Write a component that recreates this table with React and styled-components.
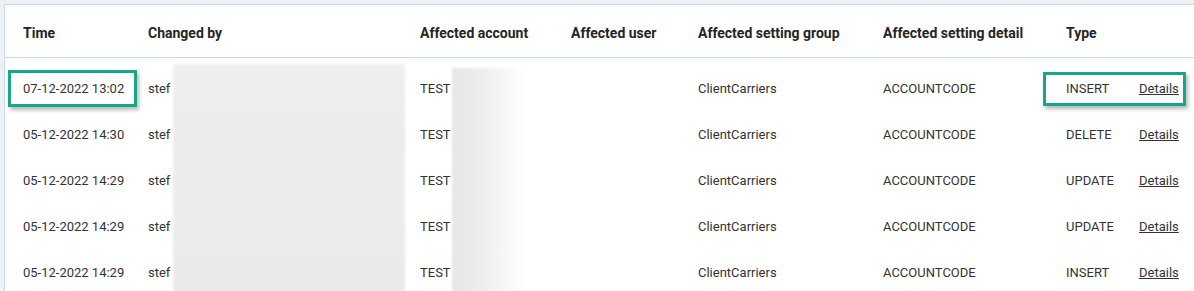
import React from "react";
import styled, { createGlobalStyle } from "styled-components";

const Global = createGlobalStyle`
  html, body { margin: 0; padding: 0; background: #eef1f4; }
  body { font-family: Roboto, "Liberation Sans", Arial, sans-serif; overflow: hidden; }
`;

const Page = styled.div`
  padding: 4px 0 0 4px;
  height: 291px;
  box-sizing: border-box;
`;

const Panel = styled.div`
  background: #fff;
  border-top: 1px solid #c3d9e8;
  border-left: 1px solid #c9dbe6;
  height: 100%;
  box-sizing: border-box;
`;

const cols = "125px 272px 151px 127px 185px 183px 73px 1fr";

const HeaderRow = styled.div`
  display: grid;
  grid-template-columns: ${cols};
  align-items: center;
  height: 52px;
  padding-left: 18px;
  border-bottom: 1px solid #c6dbea;
`;

const HeadCell = styled.div`
  font-size: 14px;
  font-weight: 700;
  color: #252525;
  padding-top: 4px;
  white-space: nowrap;
`;

const Body = styled.div`
  position: relative;
  padding-top: 7px;
`;

const Row = styled.div`
  display: grid;
  grid-template-columns: ${cols};
  align-items: center;
  height: 46px;
  padding-left: 18px;
  position: relative;
`;

const Cell = styled.div`
  font-size: 13px;
  color: #333;
  white-space: nowrap;
`;

const Link = styled.a`
  font-size: 13px;
  color: #333;
  text-decoration: underline;
  cursor: pointer;
`;

const Highlight = styled.div`
  position: absolute;
  top: 5px;
  height: 31px;
  border: 3px solid #17a688;
  box-shadow: 2px 3px 4px rgba(0, 0, 0, 0.28);
  pointer-events: none;
`;

const Redaction = styled.div`
  position: absolute;
  top: ${(p) => p.$top}px;
  bottom: 0;
  left: ${(p) => p.$left}px;
  width: ${(p) => p.$width}px;
  background: ${(p) => p.$bg};
  filter: blur(1.5px);
`;

const rows = [
  ["07-12-2022 13:02", "INSERT"],
  ["05-12-2022 14:30", "DELETE"],
  ["05-12-2022 14:29", "UPDATE"],
  ["05-12-2022 14:29", "UPDATE"],
  ["05-12-2022 14:29", "INSERT"],
];

const headers = [
  "Time",
  "Changed by",
  "Affected account",
  "Affected user",
  "Affected setting group",
  "Affected setting detail",
  "Type",
  "",
];

export default function App() {
  return (
    <>
      <Global />
      <Page>
        <Panel>
          <HeaderRow>
            {headers.map((h, i) => (
              <HeadCell key={i}>{h}</HeadCell>
            ))}
          </HeaderRow>
          <Body>
            {rows.map(([t, type], i) => (
              <Row key={i}>
                <Cell>{t}</Cell>
                <Cell>stef</Cell>
                <Cell>TEST</Cell>
                <Cell></Cell>
                <Cell>ClientCarriers</Cell>
                <Cell>ACCOUNTCODE</Cell>
                <Cell>{type}</Cell>
                <Cell>
                  <Link>Details</Link>
                </Cell>
                {i === 0 && (
                  <>
                    <Highlight style={{ left: 3, width: 123 }} />
                    <Highlight style={{ left: 1038, width: 137, top: 7, height: 28 }} />
                  </>
                )}
              </Row>
            ))}
            <Redaction
              $top={6}
              $left={168}
              $width={232}
              $bg="linear-gradient(180deg, #efefef 0%, #ebebeb 30%, #ececec 60%, #e9e9e9 100%)"
            />
            <Redaction
              $top={10}
              $left={447}
              $width={72}
              $bg="linear-gradient(90deg, #e6e6e6 0%, #eeeeee 45%, rgba(255,255,255,0) 100%)"
            />
          </Body>
        </Panel>
      </Page>
    </>
  );
}
